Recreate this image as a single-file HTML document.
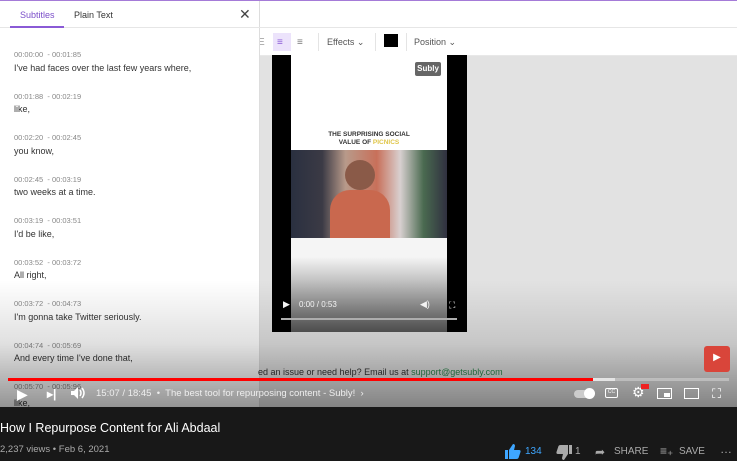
<!DOCTYPE html>
<html><head><meta charset="utf-8"><style>
*{margin:0;padding:0;box-sizing:border-box}
body{width:737px;height:461px;overflow:hidden;background:#181818;font-family:"Liberation Sans",sans-serif;position:relative}
.abs{position:absolute}
#player{left:0;top:0;width:737px;height:407px;background:#e2e2e2;overflow:hidden}
.ts{font-size:7.5px;color:#888;left:14px}
.tx{font-size:9px;color:#333;left:14px}
</style></head><body>
<div id="player" class="abs">
  <div class="abs" style="left:0;top:0;width:737px;height:55px;background:#fff"></div>
  <div class="abs" style="left:0;top:27px;width:737px;height:1px;background:#e6e6e6"></div>
  <div class="abs" style="left:0;top:55px;width:737px;height:1px;background:#e8e8e8"></div>
  <div class="abs" style="left:0;top:0;width:737px;height:1px;background:#a57bd8"></div>
  <div class="abs" style="left:258px;top:37px;font-size:10px;color:#999">E</div>
  <div class="abs" style="left:273px;top:33px;width:18px;height:18px;background:#ece3fb"></div>
  <div class="abs" style="left:277px;top:37px;font-size:10px;color:#8a5ad6">≡</div>
  <div class="abs" style="left:297px;top:37px;font-size:10px;color:#777">≡</div>
  <div class="abs" style="left:318px;top:33px;width:1px;height:18px;background:#e4e4e4"></div>
  <div class="abs" style="left:327px;top:37px;font-size:9px;color:#555">Effects ⌄</div>
  <div class="abs" style="left:375px;top:33px;width:1px;height:18px;background:#e4e4e4"></div>
  <div class="abs" style="left:384px;top:34px;width:14px;height:13px;background:#000"></div>
  <div class="abs" style="left:406px;top:33px;width:1px;height:18px;background:#e4e4e4"></div>
  <div class="abs" style="left:414px;top:37px;font-size:9px;color:#555">Position ⌄</div>
  <div class="abs" style="left:272px;top:55px;width:195px;height:277px;background:#000"></div>
  <div class="abs" style="left:291px;top:55px;width:156px;height:277px;background:#fff"></div>
  <div class="abs" style="left:415px;top:62px;width:26px;height:14px;background:#666;border-radius:2px;color:#fff;font-size:8px;font-weight:bold;text-align:center;line-height:14px">Subly</div>
  <div class="abs" style="left:291px;top:131px;width:156px;text-align:center;font-size:6.5px;font-weight:bold;color:#333;line-height:8px">THE SURPRISING SOCIAL<br>VALUE OF <span style="color:#e0c64a">PICNICS</span></div>
  <div class="abs" style="left:291px;top:150px;width:156px;height:88px;background:linear-gradient(90deg,#2a3040 0%,#3b3a45 20%,#b89a8a 35%,#c8705a 55%,#d8d0d0 70%,#4a6a50 85%,#303040 100%)"></div>
  <div class="abs" style="left:345px;top:160px;width:30px;height:30px;border-radius:50%;background:#8a5a48"></div>
  <div class="abs" style="left:330px;top:190px;width:60px;height:48px;border-radius:20px 20px 0 0;background:#c9684e"></div>
  <div class="abs" style="left:291px;top:238px;width:156px;height:94px;background:linear-gradient(#f5f5f5 20%,#555 100%)"></div>
  <div class="abs" style="left:283px;top:299px;font-size:9px;color:#fff">▶</div>
  <div class="abs" style="left:299px;top:300px;font-size:8px;color:#fff">0:00 / 0:53</div>
  <div class="abs" style="left:420px;top:299px;font-size:9px;color:#fff">◀)</div>
  <div class="abs" style="left:449px;top:300px;font-size:9px;color:#fff">⛶</div>
  <div class="abs" style="left:281px;top:318px;width:176px;height:2px;background:#bbb"></div>
  <div class="abs" style="left:0;top:1px;width:260px;height:406px;background:#fff;border-right:1px solid #ddd"></div>
  <div class="abs" style="left:0;top:27px;width:260px;height:1px;background:#e6e6e6"></div>
  <div class="abs" style="left:20px;top:10px;font-size:9px;color:#7b4fc9">Subtitles</div>
  <div class="abs" style="left:10px;top:26px;width:54px;height:2px;background:#8a5ad6"></div>
  <div class="abs" style="left:74px;top:10px;font-size:9px;color:#333">Plain Text</div>
  <div class="abs" style="left:239px;top:6px;font-size:14px;color:#444">✕</div>
  <div class="abs ts" style="top:50px">00:00:00 &nbsp;- 00:01:85</div><div class="abs tx" style="top:63px">I've had faces over the last few years where,</div>
  <div class="abs ts" style="top:92px">00:01:88 &nbsp;- 00:02:19</div><div class="abs tx" style="top:104px">like,</div>
  <div class="abs ts" style="top:133px">00:02:20 &nbsp;- 00:02:45</div><div class="abs tx" style="top:146px">you know,</div>
  <div class="abs ts" style="top:175px">00:02:45 &nbsp;- 00:03:19</div><div class="abs tx" style="top:187px">two weeks at a time.</div>
  <div class="abs ts" style="top:216px">00:03:19 &nbsp;- 00:03:51</div><div class="abs tx" style="top:229px">I'd be like,</div>
  <div class="abs ts" style="top:258px">00:03:52 &nbsp;- 00:03:72</div><div class="abs tx" style="top:270px">All right,</div>
  <div class="abs ts" style="top:299px">00:03:72 &nbsp;- 00:04:73</div><div class="abs tx" style="top:312px">I'm gonna take Twitter seriously.</div>
  <div class="abs ts" style="top:341px">00:04:74 &nbsp;- 00:05:69</div><div class="abs tx" style="top:353px">And every time I've done that,</div>
  <div class="abs ts" style="top:382px">00:05:70 &nbsp;- 00:05:96</div>
  <div class="abs tx" style="top:398px">like,</div>
  <div class="abs" style="left:258px;top:367px;font-size:9px;color:#333">ed an issue or need help? Email us at <span style="color:#2c8a4e">support@getsubly.com</span></div>
  <div class="abs" style="left:0;top:280px;width:737px;height:127px;background:linear-gradient(rgba(0,0,0,0),rgba(0,0,0,0.12) 50%,rgba(0,0,0,0.42))"></div>
  <div class="abs" style="left:704px;top:346px;width:26px;height:26px;background:#d9453a;border-radius:3px;color:#fff;font-size:10px;text-align:center;line-height:24px">▶</div>
  <div class="abs" style="left:8px;top:378px;width:721px;height:3px;background:rgba(255,255,255,0.3)"></div>
  <div class="abs" style="left:8px;top:378px;width:585px;height:3px;background:#f00"></div>
  <div class="abs" style="left:593px;top:378px;width:22px;height:3px;background:rgba(255,255,255,0.6)"></div>
  <div class="abs" style="left:17px;top:386px;font-size:14px;color:#fff">▶</div>
  <div class="abs" style="left:47px;top:387px;font-size:12px;color:#fff;font-weight:bold">▸|</div>
  <svg class="abs" style="left:70px;top:386px" width="16" height="14" viewBox="0 0 16 14"><path d="M1 5h3l4-4v12l-4-4H1z" fill="#fff"/><path d="M10 4q2 3 0 6M12 2q4 5 0 10" stroke="#fff" stroke-width="1.5" fill="none"/></svg>
  <div class="abs" style="left:96px;top:388px;font-size:9.5px;color:#eee">15:07 / 18:45 &nbsp;•&nbsp; The best tool for repurposing content - Subly! &nbsp;›</div>
  <div class="abs" style="left:574px;top:390px;width:18px;height:8px;background:#ccc;border-radius:4px"></div>
  <div class="abs" style="left:584px;top:388px;width:11px;height:11px;background:#fff;border-radius:50%"></div>
  <div class="abs" style="left:605px;top:388px;width:13px;height:10px;border:1.5px solid #fff;border-radius:2px;font-size:5px;color:#fff;text-align:center;line-height:7px">CC</div>
  <div class="abs" style="left:632px;top:384px;font-size:14px;color:#fff">⚙︎</div>
  <div class="abs" style="left:641px;top:384px;width:8px;height:5px;background:#e22"></div>
  <div class="abs" style="left:657px;top:388px;width:15px;height:11px;border:1.5px solid #fff"></div>
  <div class="abs" style="left:664px;top:393px;width:6px;height:4px;background:#fff"></div>
  <div class="abs" style="left:684px;top:388px;width:15px;height:11px;border:1.5px solid #fff"></div>
  <div class="abs" style="left:712px;top:386px;font-size:13px;color:#fff">⛶</div>
</div>
<div class="abs" style="left:0;top:421px;font-size:12.5px;color:#fff">How I Repurpose Content for Ali Abdaal</div>
<div class="abs" style="left:0;top:444px;font-size:9.5px;color:#aaa">2,237 views • Feb 6, 2021</div>
<svg class="abs" style="left:505px;top:444px" width="16" height="15" viewBox="0 0 16 15"><rect x="0" y="6" width="3" height="9" fill="#3ea6ff"/><path d="M4 6l4-6q2 0 2 2l-1 4h5q2 0 1.5 2l-2 6q-.5 1-2 1H4z" fill="#3ea6ff"/></svg>
<div class="abs" style="left:525px;top:446px;font-size:10px;color:#3ea6ff">134</div>
<svg class="abs" style="left:556px;top:445px" width="16" height="15" viewBox="0 0 16 15"><g transform="translate(16,15) rotate(180)"><rect x="0" y="6" width="3" height="9" fill="#aaa"/><path d="M4 6l4-6q2 0 2 2l-1 4h5q2 0 1.5 2l-2 6q-.5 1-2 1H4z" fill="#aaa"/></g></svg>
<div class="abs" style="left:575px;top:446px;font-size:10px;color:#aaa">1</div>
<div class="abs" style="left:595px;top:445px;font-size:12px;color:#aaa">➦</div>
<div class="abs" style="left:614px;top:446px;font-size:10px;color:#aaa">SHARE</div>
<div class="abs" style="left:660px;top:444px;font-size:12px;color:#aaa">≡₊</div>
<div class="abs" style="left:679px;top:446px;font-size:10px;color:#aaa">SAVE</div>
<div class="abs" style="left:720px;top:442px;font-size:12px;color:#aaa">…</div>
</body></html>
